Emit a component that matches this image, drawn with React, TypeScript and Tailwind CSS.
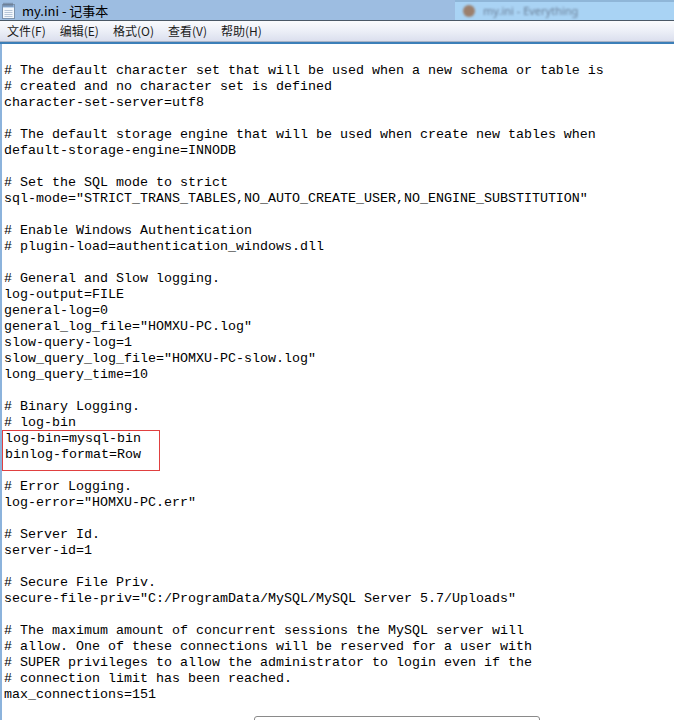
import React from "react";

const lines = [
  "",
  "# The default character set that will be used when a new schema or table is",
  "# created and no character set is defined",
  "character-set-server=utf8",
  "",
  "# The default storage engine that will be used when create new tables when",
  "default-storage-engine=INNODB",
  "",
  "# Set the SQL mode to strict",
  'sql-mode="STRICT_TRANS_TABLES,NO_AUTO_CREATE_USER,NO_ENGINE_SUBSTITUTION"',
  "",
  "# Enable Windows Authentication",
  "# plugin-load=authentication_windows.dll",
  "",
  "# General and Slow logging.",
  "log-output=FILE",
  "general-log=0",
  'general_log_file="HOMXU-PC.log"',
  "slow-query-log=1",
  'slow_query_log_file="HOMXU-PC-slow.log"',
  "long_query_time=10",
  "",
  "# Binary Logging.",
  "# log-bin",
];

const boxed = ["log-bin=mysql-bin", "binlog-format=Row"];

const rest = [
  "",
  "# Error Logging.",
  'log-error="HOMXU-PC.err"',
  "",
  "# Server Id.",
  "server-id=1",
  "",
  "# Secure File Priv.",
  'secure-file-priv="C:/ProgramData/MySQL/MySQL Server 5.7/Uploads"',
  "",
  "# The maximum amount of concurrent sessions the MySQL server will",
  "# allow. One of these connections will be reserved for a user with",
  "# SUPER privileges to allow the administrator to login even if the",
  "# connection limit has been reached.",
  "max_connections=151",
  "",
];

const menus = ["文件(F)", "编辑(E)", "格式(O)", "查看(V)", "帮助(H)"];

function NotepadIcon() {
  return (
    <svg width="15" height="17" viewBox="0 0 15 17">
      <rect x="1.5" y="2.5" width="12" height="14" fill="#f4f8fc" stroke="#7d93ad" />
      <rect x="2" y="3" width="11" height="2.5" fill="#8fb4de" />
      {[3, 5, 7, 9, 11].map((x) => (
        <path key={x} d={`M${x} 0.8 v3.8`} stroke="#5e6f84" strokeWidth="1" />
      ))}
      {[8, 10, 12, 14].map((y) => (
        <path key={y} d={`M3.5 ${y + 0.5} h8`} stroke="#b7c6d8" strokeWidth="1" />
      ))}
    </svg>
  );
}

function Line({ text }: { text: string }) {
  return <div className="h-[16px] whitespace-pre leading-[16px]">{text || " "}</div>;
}

export default function App() {
  return (
    <div className="relative w-[674px] h-[720px] overflow-hidden bg-white">
      {/* Title bar */}
      <div className="flex h-[20px] bg-[#9dbde1]">
        <div className="flex items-center flex-1 pl-[1px]">
          <NotepadIcon />
          <span className="ml-[6px] text-[13px] text-black [font-family:'Noto_Sans_CJK_SC','Noto_Sans',sans-serif] leading-none">
            my.ini - 记事本
          </span>
        </div>
        <div className="flex items-center w-[219px] bg-[#a9d3f4] border-t-2 border-[#8fb6d8] pl-[8px]">
          <div className="w-[12px] h-[12px] rounded-full bg-[#9b7f6c] blur-[1px]" />
          <span className="ml-[8px] text-[11px] text-[#6a7f98] blur-[1.2px] [font-family:'Noto_Sans',sans-serif]">
            my.ini - Everything
          </span>
        </div>
      </div>
      {/* Menu bar */}
      <div className="border-t border-[#4a5866] h-[22px] bg-gradient-to-b from-[#fafbfd] via-[#eceff7] to-[#dbdfee] border-b border-b-[#aab3c4] flex items-center pl-[7px] gap-[14px] text-[12px] text-[#1b1b1b] [font-family:'Noto_Sans_CJK_SC','Noto_Sans',sans-serif]">
        {menus.map((m) => (
          <span key={m} className="leading-none">
            {m}
          </span>
        ))}
      </div>
      <div className="h-[2px] bg-[#3c7fb8]" />
      {/* Editor */}
      <div className="h-[680px] border-l-2 border-[#8cb3dc] pl-[2px] pt-[3px] text-[13.333px] text-black [font-family:'Liberation_Mono',monospace]">
        {lines.map((l, i) => (
          <Line key={"a" + i} text={l} />
        ))}
        <div className="-ml-[2px] -mt-[1px] pb-[7px] -mb-[8px] pl-[2px] w-[158px] border border-[#e04040]">
          {boxed.map((l) => (
            <Line key={l} text={l} />
          ))}
        </div>
        {rest.map((l, i) => (
          <Line key={"b" + i} text={l} />
        ))}
      </div>
      {/* Dialog peeking in at the bottom */}
      <div className="absolute left-[254px] top-[716px] w-[286px] h-[20px] rounded-t-[3px] border border-[#8a8a8a] bg-white" />
    </div>
  );
}
